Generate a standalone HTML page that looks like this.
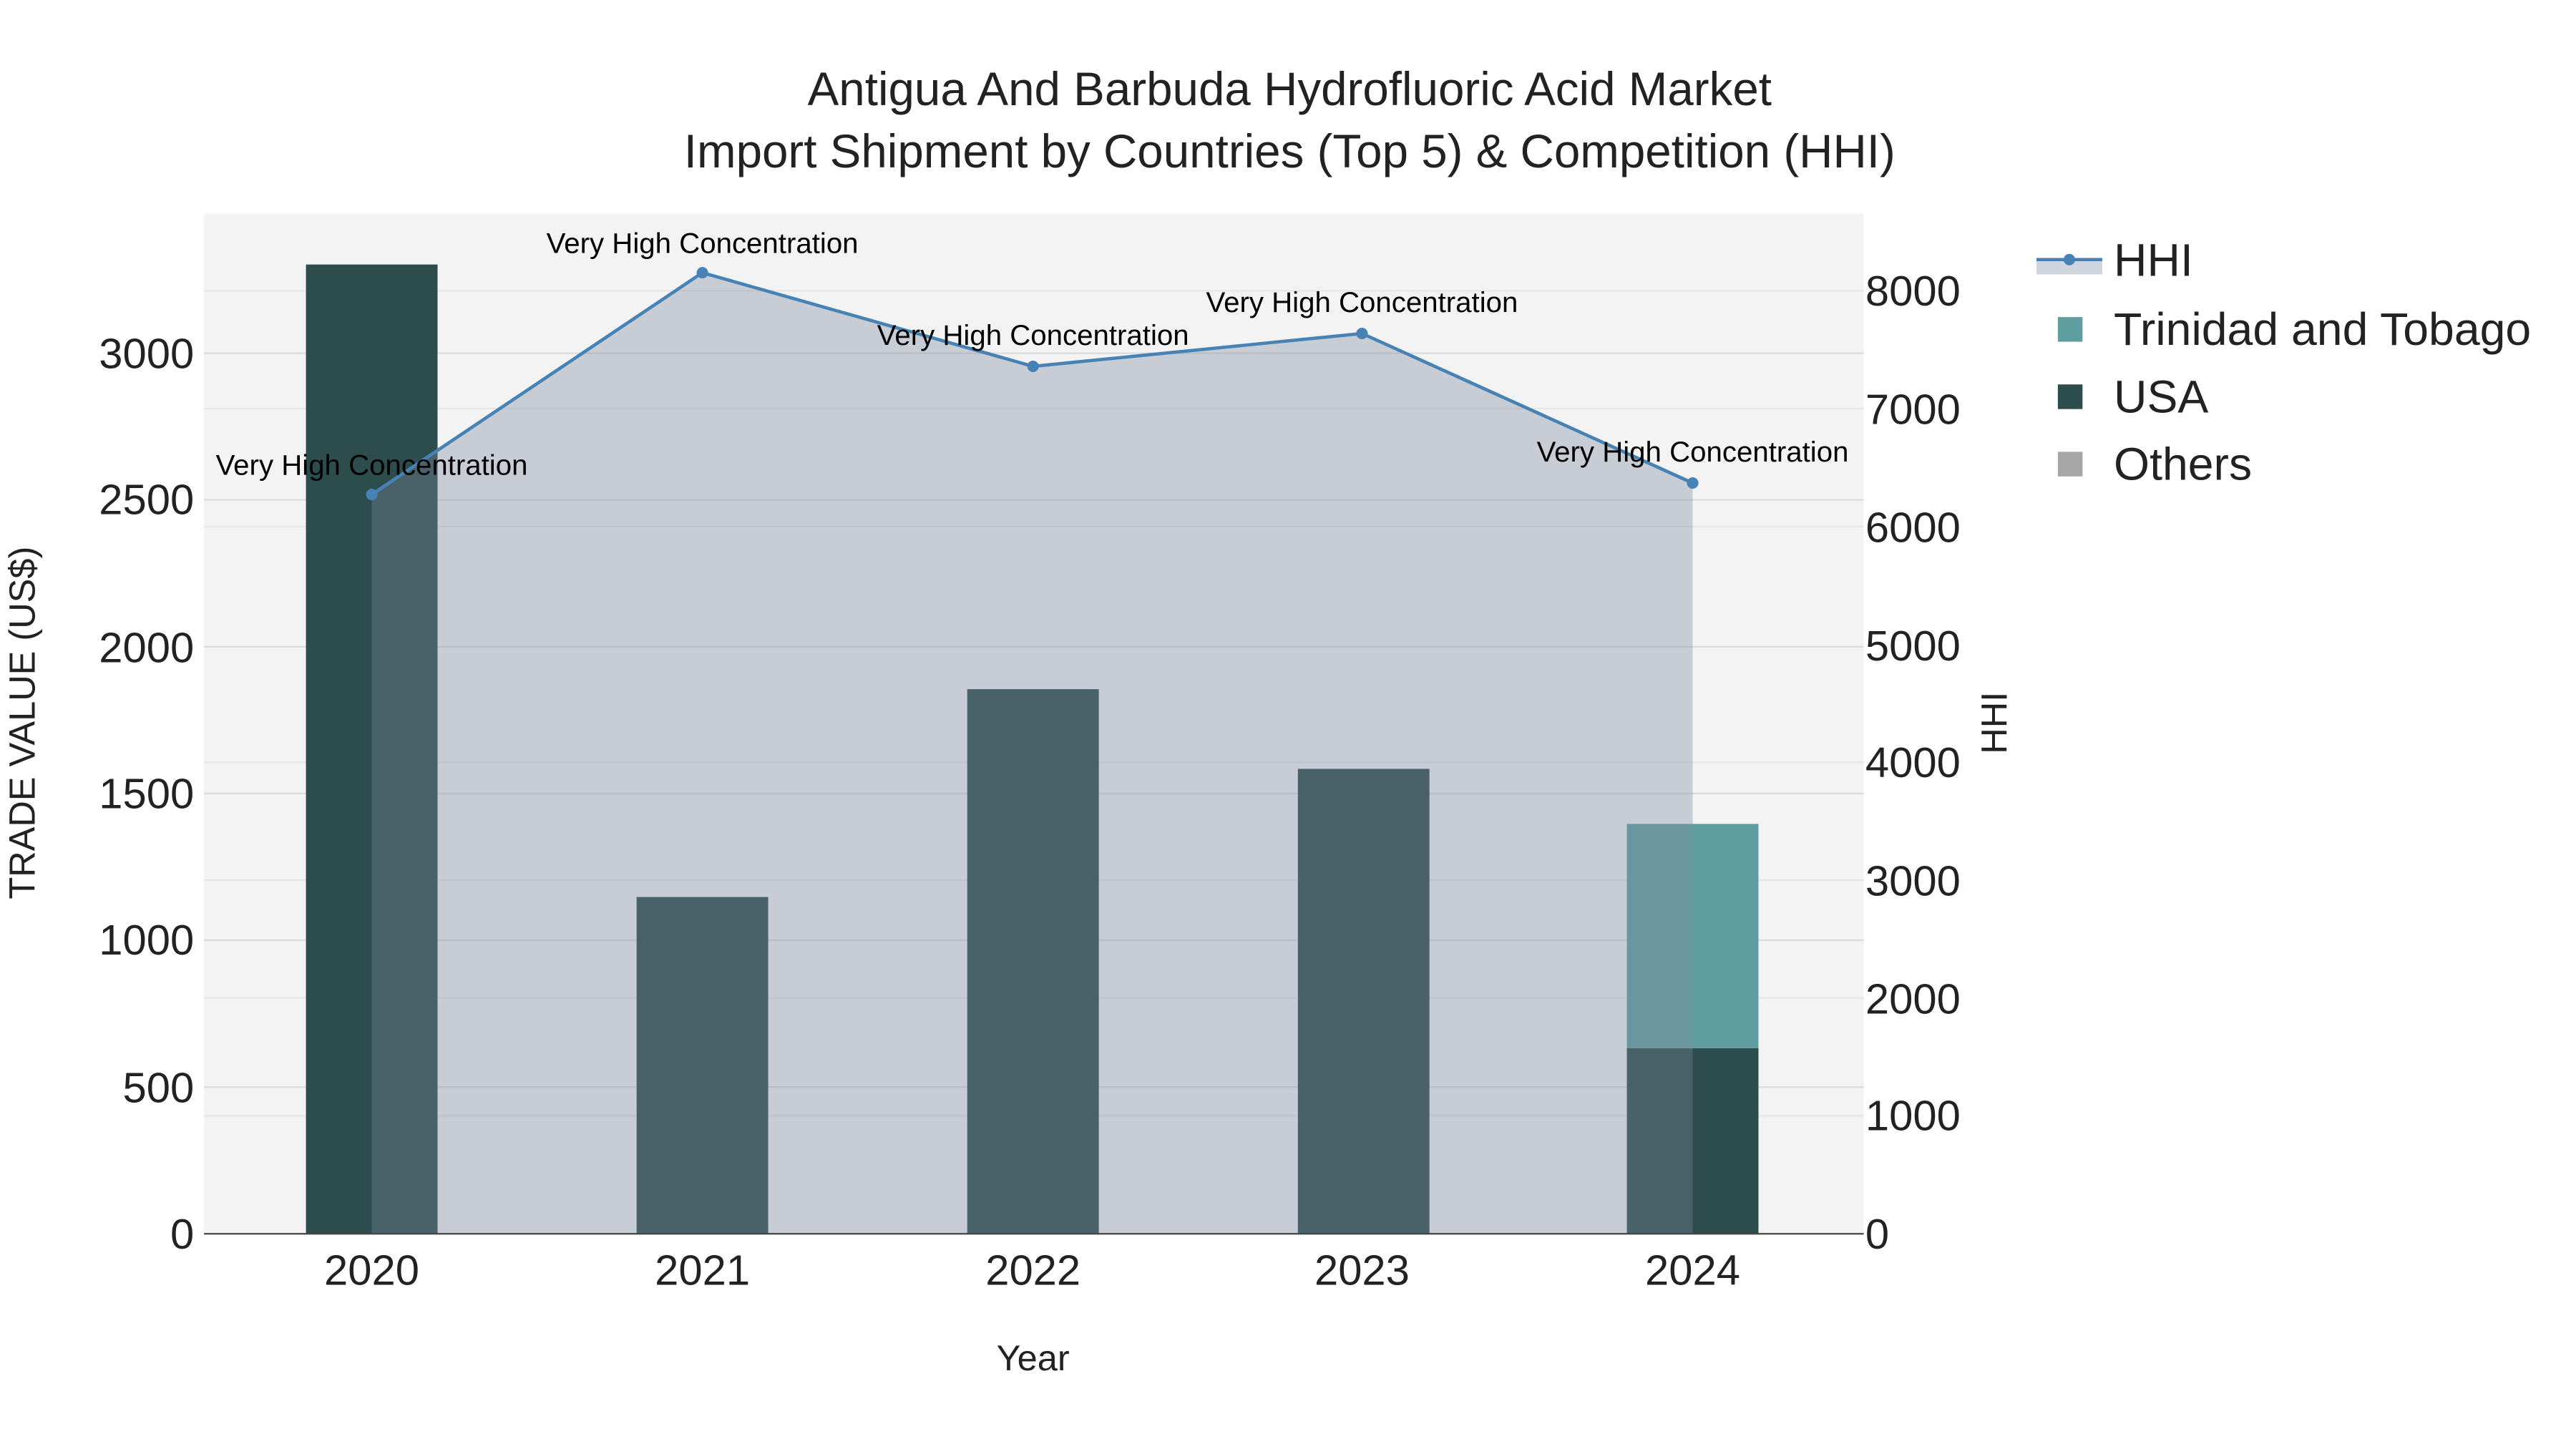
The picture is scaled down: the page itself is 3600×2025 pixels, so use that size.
<!DOCTYPE html>
<html><head><meta charset="utf-8"><style>html,body{margin:0;padding:0;background:#fff}svg{display:block}</style></head><body>
<svg width="3600" height="2025" viewBox="0 0 1566 882" preserveAspectRatio="none" xmlns="http://www.w3.org/2000/svg" font-family="Liberation Sans, Arial, sans-serif">
<rect width="1566" height="882" fill="#fff"/>
<rect x="124" y="130" width="1009" height="621" fill="#f3f3f3"/>
<g stroke="#dcdcdc" stroke-width="1">
<line x1="124" x2="1133" y1="661.7" y2="661.7"/><line x1="124" x2="1133" y1="572.3" y2="572.3"/>
<line x1="124" x2="1133" y1="483" y2="483"/><line x1="124" x2="1133" y1="393.7" y2="393.7"/>
<line x1="124" x2="1133" y1="304.3" y2="304.3"/><line x1="124" x2="1133" y1="215" y2="215"/>
</g>
<g stroke="#e6e6e6" stroke-width="1">
<line x1="124" x2="1133" y1="679.2" y2="679.2"/><line x1="124" x2="1133" y1="607.5" y2="607.5"/>
<line x1="124" x2="1133" y1="535.7" y2="535.7"/><line x1="124" x2="1133" y1="464" y2="464"/>
<line x1="124" x2="1133" y1="320.5" y2="320.5"/><line x1="124" x2="1133" y1="248.7" y2="248.7"/>
<line x1="124" x2="1133" y1="177" y2="177"/>
</g>
<g fill="#2d4d4d">
<rect x="186" y="161" width="80" height="590"/>
<rect x="387" y="546" width="80" height="205"/>
<rect x="588" y="419.5" width="80" height="331.5"/>
<rect x="789" y="468" width="80" height="283"/>
<rect x="989" y="638" width="80" height="113"/>
</g>
<rect x="989" y="501.5" width="80" height="136.5" fill="#5f9ea0"/>
<polygon points="226,301 427,166 628,223 828,203 1029,294 1029,751 226,751" fill="rgb(125,137,157)" fill-opacity="0.36"/>
<polyline points="226,301 427,166 628,223 828,203 1029,294" fill="none" stroke="#4682b4" stroke-width="2"/>
<g fill="#4682b4"><circle cx="226" cy="301" r="3.5"/><circle cx="427" cy="166" r="3.5"/><circle cx="628" cy="223" r="3.5"/><circle cx="828" cy="203" r="3.5"/><circle cx="1029" cy="294" r="3.5"/></g>
<line x1="124" x2="1133" y1="751" y2="751" stroke="#444" stroke-width="1"/>
<g font-size="17.5" fill="#000" text-anchor="middle">
<text x="226" y="289">Very High Concentration</text>
<text x="427" y="154">Very High Concentration</text>
<text x="628" y="210">Very High Concentration</text>
<text x="828" y="190">Very High Concentration</text>
<text x="1029" y="281">Very High Concentration</text>
</g>
<g font-size="28.5" fill="#222" text-anchor="middle">
<text x="784" y="64">Antigua And Barbuda Hydrofluoric Acid Market</text>
<text x="784" y="102">Import Shipment by Countries (Top 5) &amp; Competition (HHI)</text>
</g>
<g font-size="26" fill="#222" text-anchor="end">
<text x="118" y="760">0</text><text x="118" y="671">500</text><text x="118" y="581">1000</text>
<text x="118" y="492">1500</text><text x="118" y="403">2000</text><text x="118" y="313">2500</text><text x="118" y="224">3000</text>
</g>
<g font-size="26" fill="#222">
<text x="1134" y="760">0</text><text x="1134" y="688">1000</text><text x="1134" y="617">2000</text>
<text x="1134" y="545">3000</text><text x="1134" y="473">4000</text><text x="1134" y="402">5000</text>
<text x="1134" y="330">6000</text><text x="1134" y="258">7000</text><text x="1134" y="186">8000</text>
</g>
<g font-size="26" fill="#222" text-anchor="middle">
<text x="226" y="782">2020</text><text x="427" y="782">2021</text><text x="628" y="782">2022</text>
<text x="828" y="782">2023</text><text x="1029" y="782">2024</text>
</g>
<text x="628" y="834" font-size="22" fill="#222" text-anchor="middle">Year</text>
<text transform="translate(21,440) rotate(-90)" font-size="22" fill="#222" text-anchor="middle">TRADE VALUE (US$)</text>
<text transform="translate(1220,440) rotate(-90)" font-size="22" fill="#222" text-anchor="middle">HHI</text>
<rect x="1238" y="159" width="40" height="8" fill="rgb(125,137,157)" fill-opacity="0.36"/>
<line x1="1238" x2="1278" y1="158" y2="158" stroke="#4682b4" stroke-width="2"/>
<circle cx="1258" cy="158" r="3.5" fill="#4682b4"/>
<rect x="1251" y="193" width="15" height="15" fill="#5f9ea0"/>
<rect x="1251" y="234" width="15" height="15" fill="#2d4d4d"/>
<rect x="1251" y="275" width="15" height="15" fill="#a6a6a6"/>
<g font-size="28" fill="#222">
<text x="1285" y="168">HHI</text><text x="1285" y="210">Trinidad and Tobago</text>
<text x="1285" y="251">USA</text><text x="1285" y="292">Others</text>
</g>
</svg>
</body></html>
